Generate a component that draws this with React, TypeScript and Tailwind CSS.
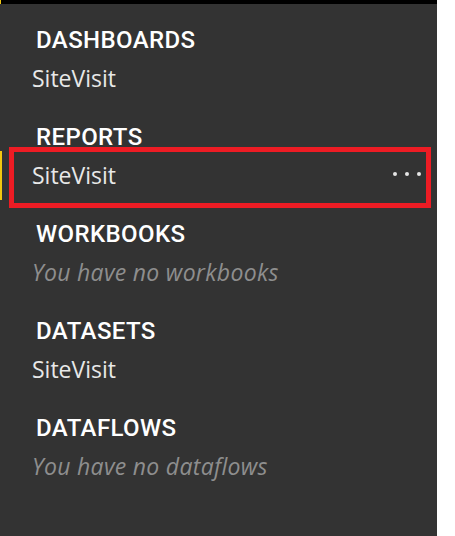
import React from "react";

const headFont = { fontFamily: "Roboto, 'Liberation Sans', sans-serif" };
const itemFont = { fontFamily: "'Open Sans', 'Noto Sans', sans-serif" };

function Heading({ children }: { children: React.ReactNode }) {
  return (
    <div
      className="h-[39px] pl-[36px] pt-[15px] text-[24px] leading-[24px] font-medium text-white tracking-[0.4px]"
      style={headFont}
    >
      {children}
    </div>
  );
}

function Item({ children, selected = false, empty = false }: { children: React.ReactNode; selected?: boolean; empty?: boolean }) {
  return (
    <div className="relative h-[58px] pl-[32px] pt-[15px]">
      {selected && <div className="absolute left-0 top-[2px] h-[49px] w-[2px] bg-[#f2c811]" />}
      <div
        className={
          empty
            ? "text-[23px] leading-[22px] italic tracking-[0.3px] text-[#8e8e8e]"
            : "text-[23px] leading-[22px] text-[#e8e8e8]"
        }
        style={itemFont}
      >
        {children}
      </div>
      {selected && (
        <>
          <div className="absolute right-[16px] top-[23px] flex gap-[8px]">
            <span className="h-[4px] w-[4px] rounded-full bg-[#e6e6e6]" />
            <span className="h-[4px] w-[4px] rounded-full bg-[#e6e6e6]" />
            <span className="h-[4px] w-[4px] rounded-full bg-[#e6e6e6]" />
          </div>
          <div className="absolute left-[9px] right-[6px] top-[-2px] bottom-[-1px] border-[5px] border-[#ed1c24]" />
        </>
      )}
    </div>
  );
}

export default function App() {
  return (
    <div className="flex h-[536px] w-[455px] bg-white">
      <div className="flex h-full w-[437px] flex-col bg-[#333333]">
        <div className="relative h-[4px] bg-black">
          <div className="absolute left-0 top-0 h-[4px] w-[1px] bg-[#f2c811]" />
        </div>
        <div className="flex flex-col pt-[9px]">
          <Heading>DASHBOARDS</Heading>
          <Item>SiteVisit</Item>
          <Heading>REPORTS</Heading>
          <Item selected>SiteVisit</Item>
          <Heading>WORKBOOKS</Heading>
          <Item empty>You have no workbooks</Item>
          <Heading>DATASETS</Heading>
          <Item>SiteVisit</Item>
          <Heading>DATAFLOWS</Heading>
          <Item empty>You have no dataflows</Item>
        </div>
      </div>
    </div>
  );
}
